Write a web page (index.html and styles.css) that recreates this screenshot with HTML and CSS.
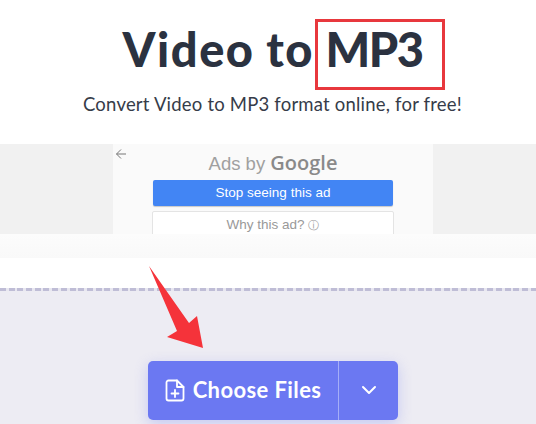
FILE: index.html
```html
<!DOCTYPE html>
<html lang="en">
<head>
    <meta charset="UTF-8">
    <title>Video to MP3</title>
    <link rel="stylesheet" href="styles.css">
</head>
<body>
    <div class="page">
        <div class="hero">
            <h1 class="title">Video to <span class="title-mark">MP3</span></h1>
            <p class="subtitle">Convert Video to MP3 format online, for free!</p>
        </div>
        <div class="ad-band">
            <div class="ad-box">
                <svg class="ad-back" width="12" height="12" viewBox="0 0 12 12" fill="none" stroke="#777" stroke-width="1">
                    <path d="M11 6H1.500M6 1.500L1.500 6L6 10.500"/>
                </svg>
                <div class="ad-by">Ads by <b>Google</b></div>
                <div class="ad-stop">Stop seeing this ad</div>
                <div class="ad-why">Why this ad? <span class="ad-info">&#9432;</span></div>
            </div>
        </div>
        <div class="fade-strip"></div>
        <div class="white-gap"></div>
        <div class="dash-line"></div>
        <div class="drop-area">
            <div class="choose-btn">
                <div class="choose-main">
                    <svg width="20" height="23" viewBox="0 0 20 23" fill="none" stroke="#fff" stroke-width="1.800" stroke-linejoin="round" stroke-linecap="round">
                        <path d="M12 1.500H3.500a2 2 0 0 0-2 2v16a2 2 0 0 0 2 2h13a2 2 0 0 0 2-2V8z"/>
                        <path d="M12 1.500V8h6.500"/>
                        <path d="M10 11v7M6.500 14.500h7"/>
                    </svg>
                    <span class="choose-label">Choose Files</span>
                </div>
                <div class="choose-more">
                    <svg width="16" height="10" viewBox="0 0 16 10" fill="none" stroke="#fff" stroke-width="2" stroke-linecap="round" stroke-linejoin="round">
                        <path d="M2 2l6 6l6-6"/>
                    </svg>
                </div>
            </div>
        </div>
        <svg class="red-arrow" width="60" height="84" viewBox="0 0 60 84">
            <path d="M1 1L41 58L49 51L55 83L19 72L29 66z" fill="#f5333a"/>
        </svg>
    </div>
</body>
</html>
```
FILE: styles.css
```css
* {
    box-sizing: border-box;
}
html, body {
    margin: 0;
    padding: 0;
}
.page {
    position: relative;
    width: 536px;
    height: 424px;
    overflow: hidden;
    background: #fff;
    font-family: "Lato", "Liberation Sans", sans-serif;
}
.hero {
    height: 144px;
    text-align: center;
    padding-top: 20px;
    padding-left: 9px;
}
.title {
    margin: 0;
    height: 59px;
    font-size: 47px;
    line-height: 59px;
    font-weight: 900;
    letter-spacing: 1.500px;
    word-spacing: -1px;
    color: #2b3240;
}
.title-mark {
    position: relative;
    letter-spacing: -1.500px;
}
.title-mark::after {
    content: "";
    position: absolute;
    left: -10px;
    top: -2px;
    width: 124px;
    height: 65px;
    border: 3px solid #e8383d;
}
.subtitle {
    margin: 14px 0 0;
    font-size: 18.500px;
    line-height: 22px;
    letter-spacing: 0.200px;
    color: #363c49;
}
.ad-band {
    height: 90px;
    background: #f1f1f1;
    display: flex;
    justify-content: center;
    padding-left: 10px;
    overflow: hidden;
}
.ad-box {
    position: relative;
    width: 320px;
    background: #fafafa;
    display: flex;
    flex-direction: column;
    align-items: center;
    font-family: "Liberation Sans", Arial, sans-serif;
}
.ad-back {
    position: absolute;
    left: 2px;
    top: 4px;
}
.ad-by {
    height: 36px;
    line-height: 37px;
    font-size: 18.500px;
    color: #a0a0a0;
}
.ad-by b {
    font-family: "Open Sans", sans-serif;
    font-size: 20px;
    font-weight: 600;
    color: #8a8a8a;
}
.ad-stop {
    width: 240px;
    height: 26px;
    flex: none;
    line-height: 26px;
    background: #4285f4;
    border-radius: 2px;
    box-shadow: 0 1px 1px rgba(0, 0, 0, 0.2);
    color: #fff;
    font-size: 13.500px;
    text-align: center;
}
.ad-why {
    width: 242px;
    height: 40px;
    flex: none;
    margin-top: 5px;
    padding-top: 5px;
    background: #fff;
    border: 1px solid #e4e4e4;
    border-radius: 2px;
    color: #999;
    font-size: 13.500px;
    text-align: center;
}
.ad-info {
    font-size: 11px;
}
.fade-strip {
    height: 24px;
    background: linear-gradient(#fcfcfc, #f9f9f9);
}
.white-gap {
    height: 30px;
}
.dash-line {
    height: 3px;
    background: repeating-linear-gradient(90deg, #bfbdd6 0, #bfbdd6 6px, #e8e7f0 6px, #e8e7f0 8.700px);
}
.drop-area {
    height: 133px;
    background: #edecf3;
    padding-top: 70px;
    padding-left: 148px;
}
.choose-btn {
    display: flex;
    width: 250px;
    height: 59px;
    background: #6b78f2;
    border-radius: 5px;
    box-shadow: 0 4px 14px rgba(107, 120, 242, 0.3);
    color: #fff;
}
.choose-main {
    width: 191px;
    display: flex;
    align-items: center;
    justify-content: center;
    gap: 8px;
    border-right: 1px solid #a5aef7;
    font-size: 22px;
    font-weight: 700;
    letter-spacing: 0.400px;
}
.choose-label {
    padding-bottom: 3px;
}
.choose-more {
    flex: 1;
    display: flex;
    align-items: center;
    justify-content: center;
    padding-bottom: 2px;
}
.red-arrow {
    position: absolute;
    left: 148px;
    top: 265px;
}
```
